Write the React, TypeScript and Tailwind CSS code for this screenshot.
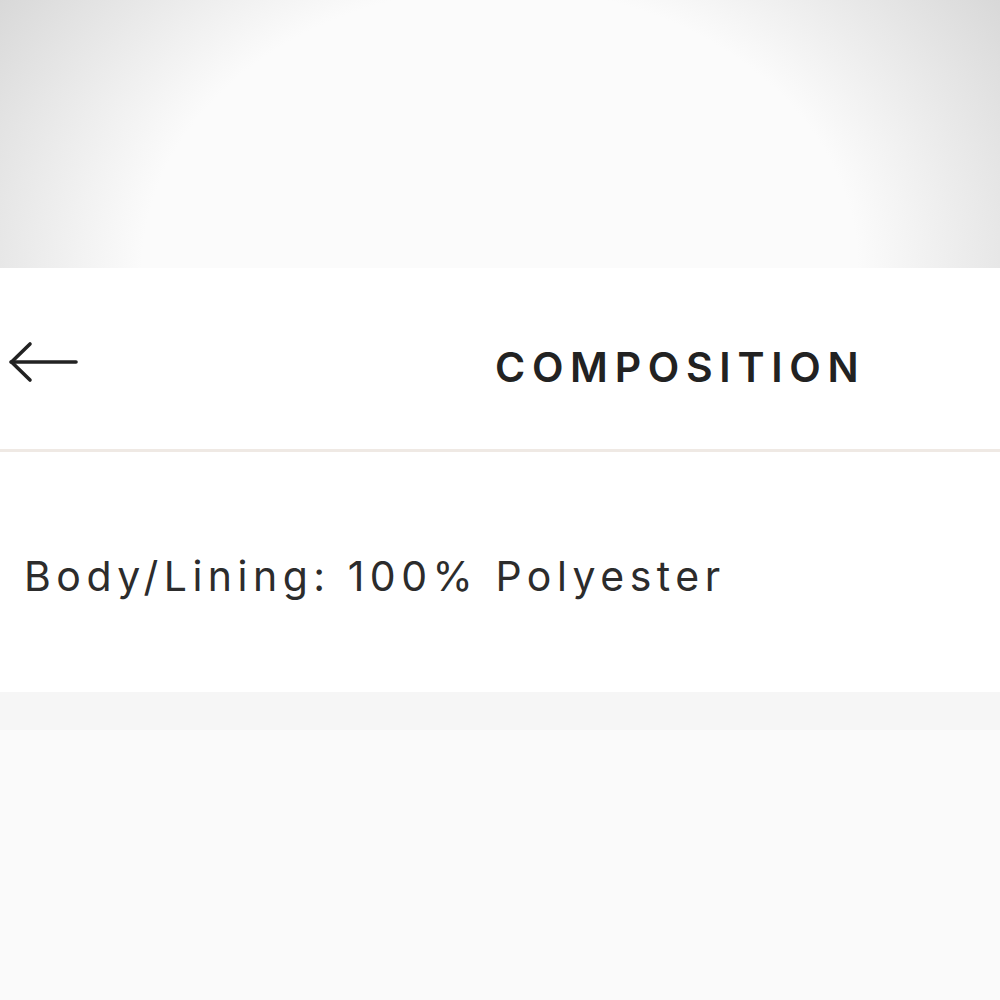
import React from 'react';

const BackArrow: React.FC = () => (
    <svg width="70" height="44" viewBox="0 0 70 44" fill="none" className="block">
        <path d="M3 22H68" stroke="#222" strokeWidth="3.6" strokeLinecap="round" />
        <path d="M22 4L3.5 22L22 40" stroke="#222" strokeWidth="3.6" strokeLinecap="round" strokeLinejoin="round" />
    </svg>
);

const App: React.FC = () => {
    return (
        <div className="w-[1000px] h-[1000px] flex flex-col bg-[#fafafa] font-['Inter','Liberation_Sans',Arial,sans-serif]">
            {/* backdrop above the sheet */}
            <div className="h-[268px] bg-[radial-gradient(ellipse_65%_190%_at_50%_100%,#fbfbfb_55%,#d2d2d2_100%)]" />

            {/* sheet */}
            <div className="bg-white flex flex-col">
                <div className="h-[181px] flex items-center">
                    <button className="ml-[8px] mt-[6px]" title="Back">
                        <BackArrow />
                    </button>
                    <h1 className="ml-[417px] mt-[18px] text-[41px] leading-none font-semibold tracking-[6.7px] text-[#222]">
                        COMPOSITION
                    </h1>
                </div>
                <div className="h-[3px] bg-[#efe9e4]" />
                <div className="h-[240px] flex items-center pl-[24px]">
                    <p className="mt-[8px] text-[41px] leading-none tracking-[5.5px] text-[#2c2c2c]">Body/Lining: 100% Polyester</p>
                </div>
            </div>

            <div className="h-[38px] bg-[#f6f6f6]" />
            <div className="flex-1 bg-[#fafafa]" />
        </div>
    );
};

export default App;
